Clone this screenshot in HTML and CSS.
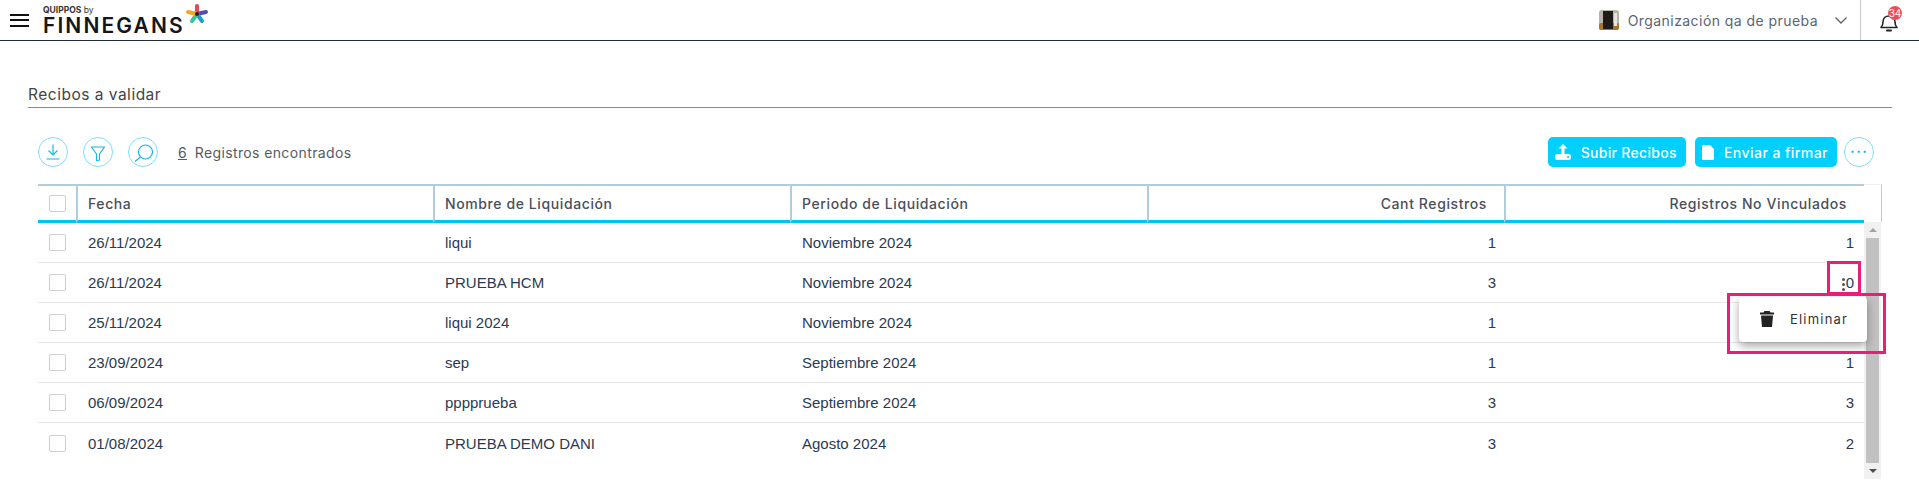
FILE: index.html
```html
<!DOCTYPE html>
<html lang="es">
<head>
  <meta charset="UTF-8" />
  <title>Recibos a validar</title>
  <link rel="stylesheet" href="styles.css">
</head>
<body>

  <!-- Barra superior -->
  <header class="topbar">
    <button class="hamburguesa" aria-label="Menú"><span></span><span></span><span></span></button>
    <div class="logo">
      <div class="logo-textos">
        <div class="logo-by"><b>QUIPPOS</b> by</div>
        <div class="logo-nombre">FINNEGANS</div>
      </div>
      <svg class="logo-estrella" width="24" height="24" viewBox="0 0 24 24" fill="none" stroke-width="4" stroke-linecap="round">
        <path d="M12 11V3" stroke="#e8474f"/>
        <path d="M12 11L21 9" stroke="#5b4bb0"/>
        <path d="M12 11L17 18" stroke="#1f9fc4"/>
        <path d="M12 11L7 18" stroke="#3cc39a"/>
        <path d="M12 11L3 9" stroke="#f5a623"/>
        <circle cx="12" cy="11" r="2" fill="#1a1a2a" stroke="none"/>
      </svg>
    </div>
    <div class="topbar-der">
      <svg class="avatar" width="20" height="20" viewBox="0 0 20 20">
        <rect width="20" height="20" rx="3" fill="#b9b4ab"/>
        <rect x="0" y="13" width="20" height="7" rx="2" fill="#a9752c"/>
        <rect x="4" y="1" width="10" height="18" fill="#1e1b18"/>
        <rect x="15" y="3" width="3" height="13" fill="#e6e4df"/>
      </svg>
      <span class="organizacion">Organización qa de prueba</span>
      <svg class="flecha" width="14" height="14" viewBox="0 0 14 14" fill="none" stroke="#5c6470" stroke-width="1.3"><path d="M1.5 4.5L7 10l5.5-5.5"/></svg>
      <div class="campana">
        <svg width="20" height="22" viewBox="0 0 20 22" fill="none" stroke="#222" stroke-width="1.6">
          <path d="M2 16.5c1.5-1.5 2-2.5 2-5.5 0-3.5 2.5-6 6-6s6 2.500 6 6c0 3 .5 4 2 5.500z" stroke-linejoin="round"/>
          <path d="M8 19.500h4" stroke-linecap="round" stroke-width="2"/>
        </svg>
        <span class="badge">34</span>
      </div>
    </div>
  </header>

  <main class="contenido">
    <h1 class="titulo">Recibos a validar</h1>

    <!-- Acciones -->
    <div class="toolbar">
      <button class="btn-circulo" aria-label="Descargar">
        <svg width="18" height="18" viewBox="0 0 18 18" fill="none" stroke="#19b5e8" stroke-width="1.200"><path d="M9 1.500v10M4.500 7.500L9 12l4.500-4.500M2.500 16h13" /></svg>
      </button>
      <button class="btn-circulo" aria-label="Filtrar">
        <svg width="18" height="18" viewBox="0 0 18 18" fill="none" stroke="#19b5e8" stroke-width="1.200"><path d="M2.500 4h13L10.500 11v6l-3 1.200V11z" stroke-linejoin="round"/></svg>
      </button>
      <button class="btn-circulo" aria-label="Buscar">
        <svg width="20" height="20" viewBox="0 0 20 20" fill="none" stroke="#19b5e8" stroke-width="1.200"><circle cx="12.500" cy="10" r="7"/><path d="M7.500 15L2 19.500"/></svg>
      </button>
      <span class="contador"><u>6</u>&nbsp; Registros encontrados</span>
      <div class="toolbar-der">
        <button class="btn-accion">
          <svg width="16" height="16" viewBox="0 0 16 16" fill="#fff"><path d="M8 0L3.500 4.500h3V10h3V4.500h3z"/><rect x="0" y="10" width="16" height="6" rx="2.500"/><circle cx="13" cy="13" r="1" fill="#00cfff"/></svg>
          Subir Recibos
        </button>
        <button class="btn-accion btn-firmar">
          <svg width="12" height="15" viewBox="0 0 12 15" fill="#fff"><path d="M1.500 0H8l4 4v9.500a1.500 1.500 0 0 1-1.500 1.500h-9A1.500 1.500 0 0 1 0 13.500v-12A1.500 1.500 0 0 1 1.500 0z"/></svg>
          Enviar a firmar
        </button>
        <button class="btn-circulo btn-mas" aria-label="Más">&middot;&middot;&middot;</button>
      </div>
    </div>

    <!-- Tabla de recibos -->
    <div class="tabla-wrap">
      <div class="tabla-col">
        <table class="tabla">
          <colgroup>
            <col class="col-check"><col class="col-ancha"><col class="col-ancha"><col class="col-ancha"><col class="col-ancha"><col class="col-ultima">
          </colgroup>
          <thead>
            <tr>
              <th><span class="check"></span></th>
              <th>Fecha</th>
              <th>Nombre de Liquidación</th>
              <th>Periodo de Liquidación</th>
              <th class="num">Cant Registros</th>
              <th class="num">Registros No Vinculados</th>
            </tr>
          </thead>
          <tbody>
            <tr><td><span class="check"></span></td><td>26/11/2024</td><td>liqui</td><td>Noviembre 2024</td><td class="num">1</td><td class="num">1</td></tr>
            <tr><td><span class="check"></span></td><td>26/11/2024</td><td>PRUEBA HCM</td><td>Noviembre 2024</td><td class="num">3</td><td class="num"><span class="puntos"><i></i><i></i><i></i></span>0</td></tr>
            <tr><td><span class="check"></span></td><td>25/11/2024</td><td>liqui 2024</td><td>Noviembre 2024</td><td class="num">1</td><td class="num">1</td></tr>
            <tr><td><span class="check"></span></td><td>23/09/2024</td><td>sep</td><td>Septiembre 2024</td><td class="num">1</td><td class="num">1</td></tr>
            <tr><td><span class="check"></span></td><td>06/09/2024</td><td>pppprueba</td><td>Septiembre 2024</td><td class="num">3</td><td class="num">3</td></tr>
            <tr><td><span class="check"></span></td><td>01/08/2024</td><td>PRUEBA DEMO DANI</td><td>Agosto 2024</td><td class="num">3</td><td class="num">2</td></tr>
          </tbody>
        </table>
      </div>
      <div class="scroll-col">
        <div class="scroll-cabecera"></div>
        <div class="scrollbar">
          <span class="scroll-arriba"></span>
          <div class="scroll-thumb"></div>
          <span class="scroll-abajo"></span>
        </div>
      </div>
    </div>
  </main>

  <!-- Menú contextual sobre la fila, con los recuadros de la captura -->
  <div class="marca marca-puntos"></div>
  <div class="menu-fila">
    <svg width="14" height="16" viewBox="0 0 14 16" fill="#222"><path d="M4.500 0h5l1 1.500H14v2H0v-2h3.500zM1 4.500h12L12 16H2z"/></svg>
    <span>Eliminar</span>
  </div>
  <div class="marca marca-menu"></div>

</body>
</html>
```

FILE: styles.css
```css
html, body {
  height: 100%;
}
body {
  margin: 0;
  overflow: hidden;
  background: #fff;
  font-family: Inter, "Open Sans", sans-serif;
  color: #4a4f5a;
}
button {
  font-family: inherit;
  cursor: pointer;
}

/* Barra superior */
.topbar {
  height: 40px;
  display: flex;
  align-items: center;
  border-bottom: 1px solid #1f2a3a;
  padding-left: 10px;
}
.hamburguesa {
  width: 19px;
  height: 13px;
  padding: 0;
  border: none;
  background: none;
  display: flex;
  flex-direction: column;
  justify-content: space-between;
}
.hamburguesa span {
  height: 2px;
  background: #111;
}
.logo {
  display: flex;
  align-items: flex-start;
  margin-left: 14px;
}
.logo-textos {
  padding-top: 1px;
}
.logo-by {
  font-size: 8.500px;
  line-height: 10px;
  color: #333;
}
.logo-nombre {
  font-size: 21px;
  line-height: 22px;
  font-weight: 600;
  color: #15161a;
  letter-spacing: 2.100px;
}
.logo-estrella {
  margin: -1px 0 0 0;
}
.topbar-der {
  margin-left: auto;
  display: flex;
  align-items: center;
  height: 40px;
}
.avatar {
  margin-right: 9px;
}
.organizacion {
  font-size: 14px;
  letter-spacing: 0.440px;
  color: #5a6474;
}
.flecha {
  margin: 0 12px 0 16px;
}
.campana {
  width: 59px;
  height: 40px;
  border-left: 1px solid #c8c8c8;
  position: relative;
  box-sizing: border-box;
  padding: 11px 0 0 18px;
}
.badge {
  position: absolute;
  left: 27px;
  top: 6px;
  width: 14px;
  height: 14px;
  border-radius: 50%;
  background: #f04b55;
  color: #fff;
  font-size: 10px;
  line-height: 14px;
  text-align: center;
}

/* Contenido */
.contenido {
  padding: 0 27px 0 28px;
}
.titulo {
  margin: 45px 0 0;
  height: 21px;
  font-size: 15.500px;
  line-height: 18px;
  font-weight: 400;
  letter-spacing: 0.500px;
  color: #444;
  border-bottom: 1px solid #8a8a8a;
}
.toolbar {
  display: flex;
  align-items: center;
  margin: 29px 10px 0 10px;
  height: 30px;
  gap: 15px;
}
.btn-circulo {
  width: 30px;
  height: 30px;
  padding: 0;
  border: 1px solid #7fdcfb;
  border-radius: 50%;
  background: #fff;
  display: flex;
  align-items: center;
  justify-content: center;
}
.contador {
  font-size: 14px;
  letter-spacing: 0.380px;
  margin-left: 5px;
  color: #555b66;
}
.contador u {
  margin-right: -1px;
}
.toolbar-der {
  margin-left: auto;
  display: flex;
  align-items: center;
  gap: 9px;
  margin-right: 8px;
}
.btn-accion {
  height: 30px;
  padding: 0 9px 0 7px;
  border: none;
  border-radius: 5px;
  background: #00cfff;
  color: #fff;
  font-size: 14px;
  font-weight: 500;
  letter-spacing: 0.320px;
  display: flex;
  align-items: center;
  gap: 10px;
}
.btn-firmar {
  letter-spacing: 0.450px;
}
.btn-mas {
  margin-left: -2px;
  color: #19b5e8;
  font-size: 18px;
  line-height: 1;
  letter-spacing: 1px;
}

/* Tabla */
.tabla-wrap {
  display: flex;
  margin: 17px 0 0 10px;
}
.tabla-col {
  width: 1826px;
}
.tabla {
  width: 100%;
  border-collapse: separate;
  border-spacing: 0;
  table-layout: fixed;
}
.col-check {
  width: 38px;
}
.col-ancha {
  width: 357px;
}
.tabla th {
  height: 34px;
  padding: 0 10px 0 10px;
  font-size: 14px;
  font-weight: 500;
  letter-spacing: 0.600px;
  text-align: left;
  color: #4a4f5a;
  border-top: 2px solid #b0cde0;
  border-left: 2px solid #b0cde0;
  border-bottom: 3px solid #00c4f4;
}
.tabla th:first-child {
  border-left: none;
  padding: 0 0 0 11px;
}
.tabla td {
  height: 40px;
  padding: 0 10px 0 12px;
  font-family: "Liberation Sans", Arial, sans-serif;
  font-size: 15px;
  color: #2b3a52;
  border-bottom: 1px solid #e6e6e6;
  box-sizing: border-box;
}
.tabla td:first-child {
  padding: 0 0 0 11px;
}
.tabla tbody tr:last-child td {
  border-bottom: none;
}
.tabla .num {
  text-align: right;
  padding-right: 8px;
}
.tabla td.num:last-child {
  padding-right: 10px;
}
.tabla th.num {
  padding-right: 17px;
}
.check {
  display: block;
  width: 15px;
  height: 15px;
  border: 1px solid #cfcfcf;
  border-radius: 2px;
  background: #fff;
}
.puntos {
  display: inline-flex;
  flex-direction: column;
  gap: 2px;
  margin-right: 1px;
  vertical-align: middle;
}
.puntos i {
  width: 3px;
  height: 3px;
  border-radius: 50%;
  background: #555;
}

/* Barra de scroll */
.scroll-col {
  width: 18px;
  display: flex;
  flex-direction: column;
}
.scroll-cabecera {
  height: 37px;
  border-right: 1px solid #b0cde0;
  border-top: 1px solid #eee;
}
.scrollbar {
  width: 17px;
  height: 257px;
  background: #f1f1f1;
  display: flex;
  flex-direction: column;
  align-items: center;
  justify-content: space-between;
}
.scroll-thumb {
  width: 13px;
  flex: 1;
  background: #c1c1c1;
}
.scroll-arriba,
.scroll-abajo {
  width: 0;
  height: 0;
  margin: 6px 0;
  border-left: 4px solid transparent;
  border-right: 4px solid transparent;
}
.scroll-arriba {
  border-bottom: 4px solid #a3a3a3;
}
.scroll-abajo {
  border-top: 4px solid #505050;
}

/* Menú y recuadros superpuestos */
.menu-fila {
  position: absolute;
  left: 1739px;
  top: 297px;
  width: 128px;
  height: 45px;
  box-sizing: border-box;
  padding: 0 0 2px 21px;
  display: flex;
  align-items: center;
  gap: 16px;
  background: #fff;
  border-radius: 4px;
  box-shadow: 0 4px 10px rgba(0, 0, 0, 0.35);
  font-size: 13px;
  letter-spacing: 1.200px;
  color: #333;
}
.marca {
  position: absolute;
  box-sizing: border-box;
  border: 3px solid #e91e79;
}
.marca-puntos {
  left: 1827px;
  top: 261px;
  width: 34px;
  height: 34px;
}
.marca-menu {
  left: 1727px;
  top: 293px;
  width: 159px;
  height: 61px;
}
```
